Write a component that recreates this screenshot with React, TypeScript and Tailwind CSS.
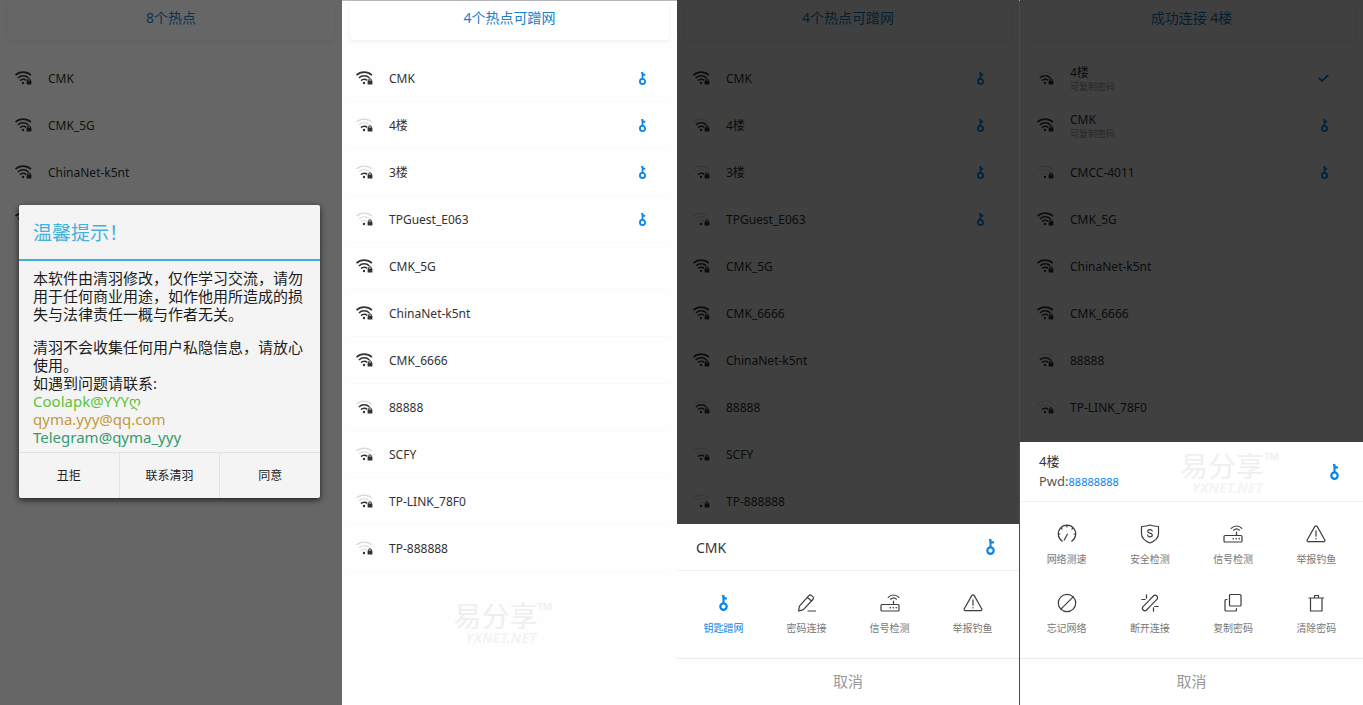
import React from "react";

interface Hotspot {
  name: string;
  level: number;
  mark?: "key" | "check";
  note?: string;
}

interface Action {
  label: string;
  icon: React.ReactNode;
  active?: boolean;
}

const scanned: Hotspot[] = [
  { name: "CMK", level: 3 },
  { name: "CMK_5G", level: 3 },
  { name: "ChinaNet-k5nt", level: 3 },
  { name: "CMK_6666", level: 3 },
];

const available: Hotspot[] = [
  { name: "CMK", level: 3, mark: "key" },
  { name: "4楼", level: 1, mark: "key" },
  { name: "3楼", level: 1, mark: "key" },
  { name: "TPGuest_E063", level: 0, mark: "key" },
  { name: "CMK_5G", level: 3 },
  { name: "ChinaNet-k5nt", level: 3 },
  { name: "CMK_6666", level: 3 },
  { name: "88888", level: 2 },
  { name: "SCFY", level: 1 },
  { name: "TP-LINK_78F0", level: 1 },
  { name: "TP-888888", level: 0 },
];

const selecting: Hotspot[] = [
  { name: "CMK", level: 3, mark: "key" },
  { name: "4楼", level: 2, mark: "key" },
  { name: "3楼", level: 1, mark: "key" },
  { name: "TPGuest_E063", level: 0, mark: "key" },
  { name: "CMK_5G", level: 3 },
  { name: "CMK_6666", level: 3 },
  { name: "ChinaNet-k5nt", level: 3 },
  { name: "88888", level: 2 },
  { name: "SCFY", level: 1 },
  { name: "TP-888888", level: 0 },
];

const connected: Hotspot[] = [
  { name: "4楼", level: 2, mark: "check", note: "可复制密码" },
  { name: "CMK", level: 3, mark: "key", note: "可复制密码" },
  { name: "CMCC-4011", level: 0, mark: "key" },
  { name: "CMK_5G", level: 3 },
  { name: "ChinaNet-k5nt", level: 3 },
  { name: "CMK_6666", level: 3 },
  { name: "88888", level: 2 },
  { name: "TP-LINK_78F0", level: 1 },
];

function WifiIcon({ level }: { level: number }) {
  const on = "#333333";
  const off = "#d9d9d9";
  return (
    <svg className="w-[17px] h-[14px] shrink-0" viewBox="0 0 17 14" fill="none">
      <path d="M.5 4.1C4.6.1 11.6.1 15.9 4.1" stroke={level > 2 ? on : off} strokeWidth={level > 2 ? 1.6 : 1.1} />
      <path d="M2.9 6.9C5.7 4 10.7 4 13.4 6.9" stroke={level > 1 ? on : off} strokeWidth={level > 1 ? 1.5 : 1.1} />
      <path d="M5 9.6c1.8-1.8 4.6-1.8 6.2-.2" stroke={level > 0 ? on : off} strokeWidth={level > 0 ? 1.5 : 1.1} />
      <circle cx="8" cy="12" r="1.2" fill={on} />
      <path d="M12.6 10V9.2a1.4 1.4 0 0 1 2.8 0V10" stroke={on} strokeWidth="1" />
      <rect x="11.6" y="9.6" width="4.8" height="3.9" rx=".5" fill={on} />
    </svg>
  );
}

function KeyIcon({ className }: { className: string }) {
  return (
    <svg className={className} viewBox="0 0 9 16" fill="none" stroke="#0a84e6">
      <circle cx="4.5" cy="11.6" r="3.2" strokeWidth="2.2" />
      <path d="M4.5 8.6V.2" strokeWidth="2.1" />
      <path d="M3 1.2h1.5M4.5 3.4h3.4" strokeWidth="2.2" />
    </svg>
  );
}

function CheckIcon() {
  return (
    <svg className="w-[11px] h-3" viewBox="0 0 11 12" fill="none" stroke="#0a84e6" strokeWidth="1.8">
      <path d="m.8 5.8 3.3 3.2 6.2-6" />
    </svg>
  );
}

function Stroke({ children }: { children: React.ReactNode }) {
  return (
    <svg
      className="w-[22px] h-[22px]"
      viewBox="0 0 22 22"
      fill="none"
      stroke="#3c3c3c"
      strokeWidth="1.2"
      strokeLinecap="round"
      strokeLinejoin="round"
    >
      {children}
    </svg>
  );
}

const pencilIcon = (
  <Stroke>
    <path d="M2.5 19l1-4.8L12.8 3.6a2 2 0 0 1 2.8 0l1.2 1a2 2 0 0 1 .1 2.9L7.4 17.6 2.5 19zM11.4 5.3l3.8 3.5M12 19h7.5" />
  </Stroke>
);

const routerIcon = (
  <Stroke>
    <rect x="2" y="12.5" width="18" height="6.5" rx="1" />
    <path d="M14.5 12.5V9M9.2 5.3c2.9-3.1 7.8-3.1 10.6 0M11.6 7.2c1.7-1.6 4.2-1.6 5.8 0" />
    <path d="M11.2 15.8h.1M14.2 15.8h.1M17.2 15.8h.1" strokeWidth="1.6" />
  </Stroke>
);

const warningIcon = (
  <Stroke>
    <path d="M9.9 3.4a1.3 1.3 0 0 1 2.2 0l7.6 13.3a1.2 1.2 0 0 1-1.1 1.9H3.4a1.2 1.2 0 0 1-1.1-1.9L9.9 3.4zM11 7.8v5.4M11 15.6v.3" />
  </Stroke>
);

const speedIcon = (
  <Stroke>
    <path d="M6.3 18.2a8.7 8.7 0 1 1 9.4 0M11.4 11.2 8.2 17M11 2.4V4M4.9 4.9l1.2 1.2M17.1 4.9l-1.2 1.2M2.5 11H4M19.5 11H18" />
  </Stroke>
);

const shieldIcon = (
  <Stroke>
    <path d="M11 2c2.6 1.1 5.4 1.4 8.5 1.5v7.1c0 4.4-3.8 7.6-8.5 9.4-4.7-1.8-8.5-5-8.5-9.4V3.5C5.6 3.4 8.4 3.1 11 2z" />
    <path d="M13.2 8.2c-.2-1-1.1-1.5-2.2-1.5-1.2 0-2.2.6-2.2 1.7 0 2.4 4.5 1.2 4.5 3.7 0 1.2-1 1.8-2.3 1.8s-2.2-.6-2.4-1.7" />
  </Stroke>
);

const forbidIcon = (
  <Stroke>
    <circle cx="11" cy="11" r="8.7" />
    <path d="M4.9 17.2 17.2 4.9" />
  </Stroke>
);

const unlinkIcon = (
  <Stroke>
    <path d="M10.2 8.4 14.4 4a2.4 2.4 0 0 1 3.5 3.4l-5.4 5.4M11.8 13.6 7.6 18a2.4 2.4 0 0 1-3.5-3.4l5.4-5.4" />
    <path d="M7.5 2.8v3.4M2.8 7.5h3.4M14.5 15.8v3.4M15.8 14.5h3.4" />
  </Stroke>
);

const copyIcon = (
  <Stroke>
    <rect x="7.5" y="2.5" width="11.5" height="11.5" rx="1" />
    <path d="M5 7.5H4a1 1 0 0 0-1 1V18a1 1 0 0 0 1 1h9.5a1 1 0 0 0 1-1v-1.5" />
  </Stroke>
);

const trashIcon = (
  <Stroke>
    <path d="M4 6h14.5M9.5 5.5v-2h4v2M5.500 6.500V19H17V6.500" />
  </Stroke>
);

const selectActions: Action[] = [
  { label: "钥匙蹭网", icon: <KeyIcon className="w-[9px] h-4" />, active: true },
  { label: "密码连接", icon: pencilIcon },
  { label: "信号检测", icon: routerIcon },
  { label: "举报钓鱼", icon: warningIcon },
];

const connectedActions: Action[] = [
  { label: "网络测速", icon: speedIcon },
  { label: "安全检测", icon: shieldIcon },
  { label: "信号检测", icon: routerIcon },
  { label: "举报钓鱼", icon: warningIcon },
  { label: "忘记网络", icon: forbidIcon },
  { label: "断开连接", icon: unlinkIcon },
  { label: "复制密码", icon: copyIcon },
  { label: "清除密码", icon: trashIcon },
];

function ScreenTitle({ children }: { children: React.ReactNode }) {
  return (
    <h2 className="mx-2 h-[39px] rounded-b bg-white text-center text-[14px] leading-[34px] text-[#1a80cc] shadow-[0_2px_5px_rgba(0,0,0,0.06)]">
      {children}
    </h2>
  );
}

function HotspotList({ items, className }: { items: Hotspot[]; className: string }) {
  return (
    <ul className="mt-[15px]">
      {items.map((spot) => (
        <li key={spot.name} className="mx-2 h-[47px] border-b border-[#f9f9f9]">
          <div className={`flex h-full items-center ${className}`}>
            <WifiIcon level={spot.level} />
            <div className="ml-4 flex-1 pt-px">
              <p className="text-[12px] leading-4 text-[#333]">{spot.name}</p>
              {spot.note && <p className="text-[9px] leading-3 text-[#a0a0a0]">{spot.note}</p>}
            </div>
            {spot.mark === "key" && <KeyIcon className="w-[9px] h-[13px]" />}
            {spot.mark === "check" && <CheckIcon />}
          </div>
        </li>
      ))}
    </ul>
  );
}

function Watermark() {
  return (
    <div className="w-[104px] text-[#efefef]" aria-hidden="true">
      <p className="flex items-start text-[28px] leading-8">
        易分享<span className="text-[20px] leading-5">™</span>
      </p>
      <p className="pl-3 text-[14px] leading-3 font-bold italic text-[#f4f4f4]">YXNET.NET</p>
    </div>
  );
}

function ActionGrid({ actions }: { actions: Action[] }) {
  return (
    <div className="grid grid-cols-4 gap-y-[25px] px-[5px] pt-[21px] pb-[22px]">
      {actions.map((action) => (
        <button key={action.label} type="button" className="flex flex-col items-center">
          <span className="flex h-[22px] items-center">{action.icon}</span>
          <span className={`mt-[6px] text-[10px] leading-4 ${action.active ? "text-[#0a84e6]" : "text-[#777]"}`}>
            {action.label}
          </span>
        </button>
      ))}
    </div>
  );
}

function CancelButton() {
  return (
    <button type="button" className="h-[47px] w-full border-t border-[#ebebeb] pb-0.5 text-[15px] text-[#999]">
      取消
    </button>
  );
}

function NoticeDialog() {
  const button = "h-[45px] flex-1 text-[12px] text-[#222]";
  return (
    <div
      role="dialog"
      aria-labelledby="notice-title"
      className="w-full rounded-[2px] bg-[#f4f4f4] shadow-[0_2px_6px_rgba(0,0,0,0.7)]"
    >
      <h3
        id="notice-title"
        className="h-[56px] border-b-2 border-[#44acd8] px-[14px] text-[19px] leading-[56px] text-[#44b0dc]"
      >
        温馨提示！
      </h3>
      <div className="px-[14px] pt-2 pb-1.5 text-[15px] leading-[18px] text-[#1c1c1c]">
        <p>本软件由清羽修改，仅作学习交流，请勿用于任何商业用途，如作他用所造成的损失与法律责任一概与作者无关。</p>
        <p className="mt-[15px]">清羽不会收集任何用户私隐信息，请放心使用。</p>
        <p>如遇到问题请联系:</p>
        <p className="text-[#5cc23c]">Coolapk@YYYღ</p>
        <p className="text-[#c49a3c]">qyma.yyy@qq.com</p>
        <p className="text-[#379a6e]">Telegram@qyma_yyy</p>
      </div>
      <div className="flex divide-x divide-[#e2e2e2] border-t border-[#e2e2e2]">
        <button type="button" className={button}>丑拒</button>
        <button type="button" className={button}>联系清羽</button>
        <button type="button" className={button}>同意</button>
      </div>
    </div>
  );
}

export default function App() {
  return (
    <main className="grid min-h-screen grid-cols-[342fr_335fr_342fr_344fr] bg-[#fefefe] font-['Noto_Sans','Noto_Sans_CJK_SC',sans-serif]">
      <section className="relative border-t border-white">
        <ScreenTitle>8个热点</ScreenTitle>
        <HotspotList items={scanned} className="pl-[7px] pr-7" />
        <div className="absolute inset-x-0 bottom-0 -top-px flex items-center bg-black/60 pl-[19px] pr-[22px] pb-0.5">
          <NoticeDialog />
        </div>
      </section>

      <section className="border-t border-[#b4b8bb]">
        <ScreenTitle>4个热点可蹭网</ScreenTitle>
        <HotspotList items={available} className="pl-[6px] pr-[22px]" />
        <div className="mt-7 flex justify-center pr-2">
          <Watermark />
        </div>
      </section>

      <section className="relative border-t border-white">
        <ScreenTitle>4个热点可蹭网</ScreenTitle>
        <HotspotList items={selecting} className="pl-2 pr-[26px]" />
        <div className="absolute inset-x-0 bottom-0 -top-px flex flex-col justify-end bg-black/75">
          <div className="bg-white">
            <div className="flex h-[47px] items-center justify-between border-b border-[#f0f0f0] pl-[19px] pr-6">
              <h3 className="text-[14px] text-[#333]">CMK</h3>
              <KeyIcon className="w-[9px] h-4" />
            </div>
            <ActionGrid actions={selectActions} />
            <CancelButton />
          </div>
        </div>
      </section>

      <section className="relative border-t border-l border-t-white border-l-[#4a4a4a]">
        <ScreenTitle>成功连接 4楼</ScreenTitle>
        <HotspotList items={connected} className="pl-[9px] pr-[26px]" />
        <div className="absolute inset-x-0 bottom-0 -top-px flex flex-col justify-end bg-black/75">
          <div className="bg-white">
            <div className="relative flex h-[60px] items-center justify-between border-b border-[#f0f0f0] pl-[19px] pr-6">
              <div className="leading-5">
                <h3 className="text-[13px] text-[#333]">4楼</h3>
                <p className="text-[13px] text-[#555]">
                  Pwd:<span className="text-[11px] text-[#0a84e6]">88888888</span>
                </p>
              </div>
              <div className="absolute top-2 left-40">
                <Watermark />
              </div>
              <KeyIcon className="w-[9px] h-4" />
            </div>
            <ActionGrid actions={connectedActions} />
            <CancelButton />
          </div>
        </div>
      </section>
    </main>
  );
}
